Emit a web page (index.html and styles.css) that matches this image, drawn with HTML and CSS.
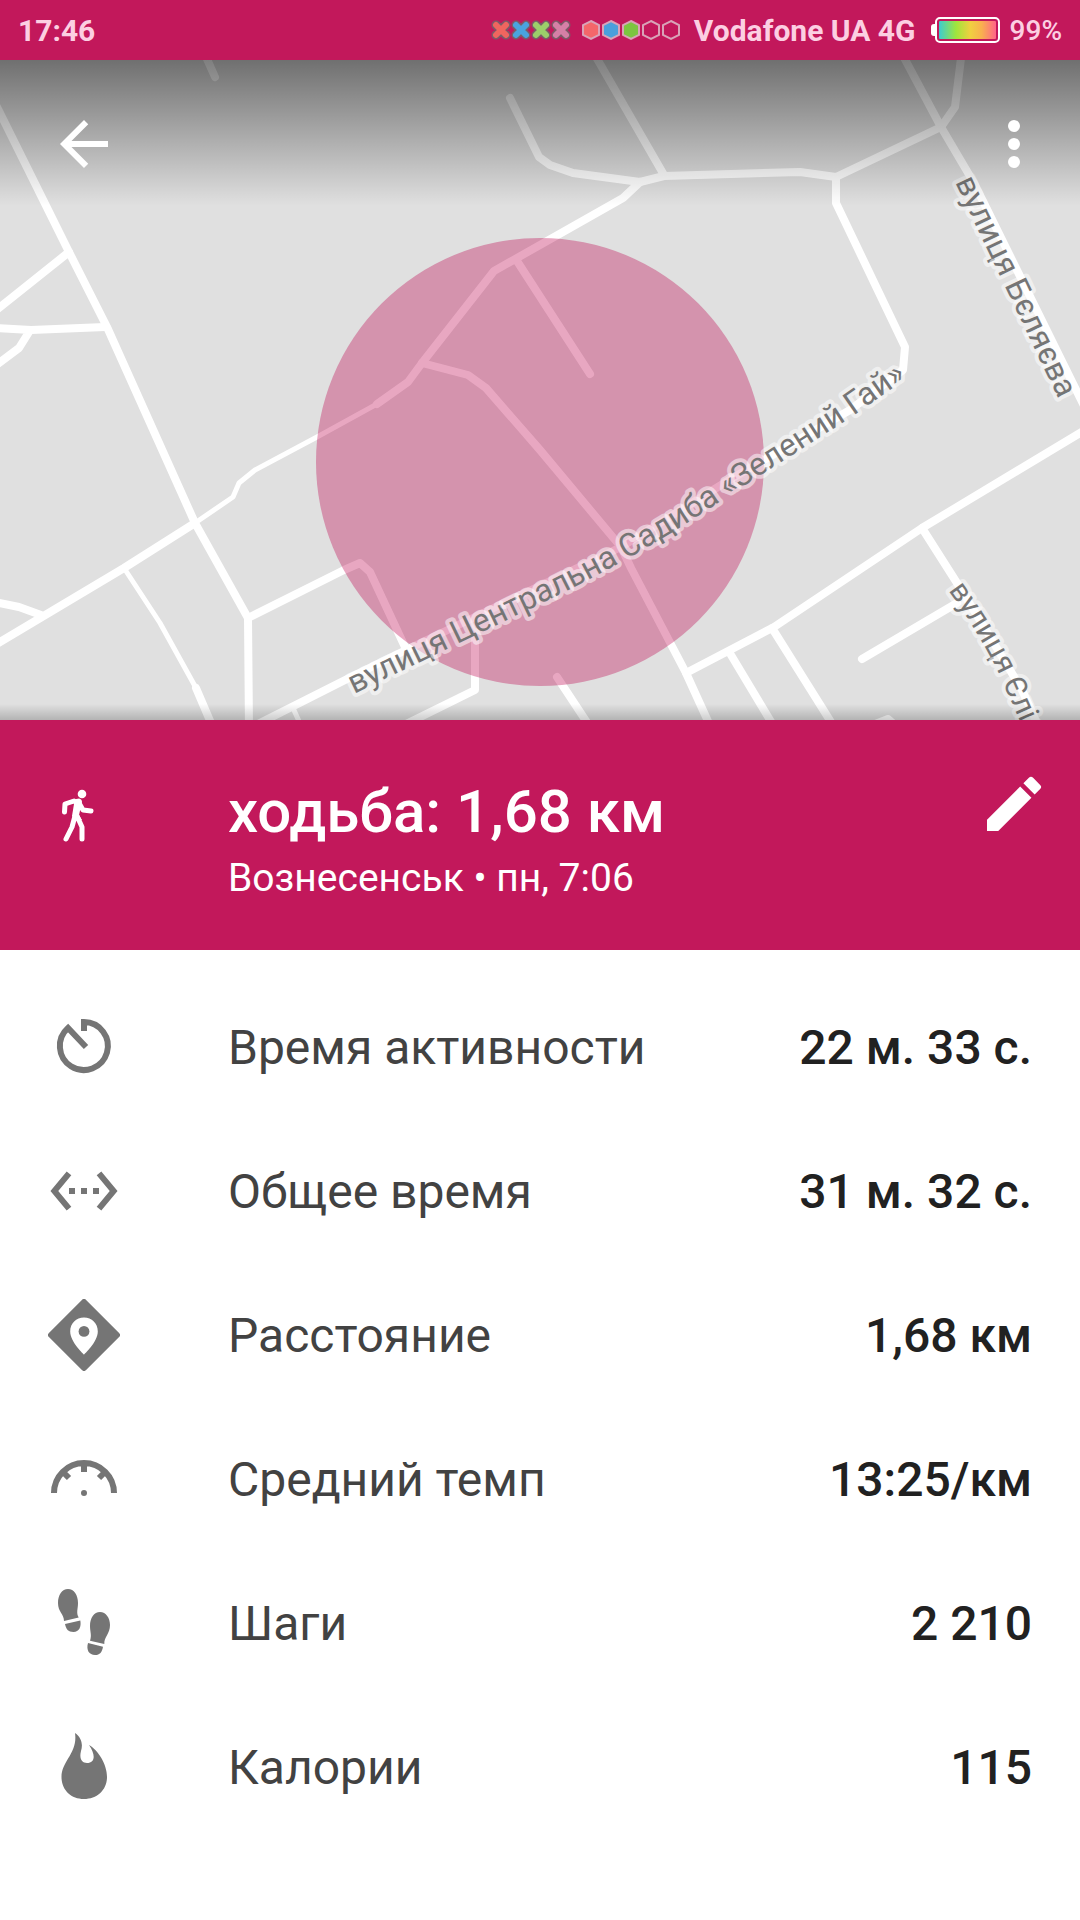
FILE: index.html
```html
<!DOCTYPE html>
<html lang="ru">
<head>
  <meta charset="UTF-8">
  <meta name="viewport" content="width=device-width, initial-scale=1.0">
  <title>Ходьба</title>
  <link rel="stylesheet" href="styles.css">
</head>
<body>
  <div class="statusbar">
    <span class="clock">17:46</span>
    <svg class="signal" width="184" height="24" viewBox="0 0 184 24">
      <g stroke-linecap="round" fill="none">
        <path d="M7 7l10 10M17 7L7 17M27 7l10 10M37 7L27 17M47 7l10 10M57 7L47 17M67 7l10 10M77 7L67 17" stroke="#7b5c68" stroke-width="9"/>
        <path d="M7 7l10 10M17 7L7 17" stroke="#f0655f" stroke-width="6"/>
        <path d="M27 7l10 10M37 7L27 17" stroke="#4aa3df" stroke-width="6"/>
        <path d="M47 7l10 10M57 7L47 17" stroke="#9ccf6a" stroke-width="6"/>
        <path d="M67 7l10 10M77 7L67 17" stroke="#d67fa6" stroke-width="6"/>
      </g>
      <g stroke="#d9a3b8" stroke-width="2">
        <path d="M102 3l8 4v10l-8 4-8-4V7z" fill="#f4666a"/>
        <path d="M122 3l8 4v10l-8 4-8-4V7z" fill="#4a9fdc"/>
        <path d="M142 3l8 4v10l-8 4-8-4V7z" fill="#7cc540"/>
        <path d="M162 3l8 4v10l-8 4-8-4V7zM182 3l8 4v10l-8 4-8-4V7z" fill="none"/>
      </g>
    </svg>
    <span class="carrier">Vodafone UA 4G</span>
    <span class="battery"></span>
    <span class="percent">99%</span>
  </div>

  <div class="map">
    <svg class="map-canvas" viewBox="0 60 1080 660">
      <defs>
        <path id="street1" d="M354 694L540 604Q640 556 722 500L850 418L950 348"/>
        <path id="street2" d="M955 182L1070 423"/>
        <path id="street3" d="M948 590Q981 636 999 674L1040 766"/>
      </defs>
      <!-- roads -->
      <g class="roads">
        <path d="M-5 103L69 252L107 327L195 523L248 618L249 730"/>
        <path d="M69 252L-5 311M-5 328L31 330L105 327M29 332L19 348L-5 366"/>
        <path d="M203 50L215 77M510 98L539 157L550 165L573 173L640 182L664 176L800 172L836 177L941 127L955 107L962 50"/>
        <path d="M592 50L664 175M900 50L941 127L974 183L1090 418"/>
        <path d="M640 182L623 198L540 245L494 271L422 363L408 382L377 404M517 261L590 374"/>
        <path d="M836 177V203L905 347L903 370L850 410L726 482L621 547L406 650L355 675L252 727"/>
        <path d="M422 363L468 375L486 388L540 450L621 547L631 568L686 673L712 730"/>
        <path d="M-5 645L124 568L195 523M-5 602L19 607L41 615M196 688L214 730"/>
        <path d="M248 618L344 570L360 563L370 572L405 647M475 640V690L400 727"/>
        <path d="M557 677L592 730M686 673L774 627L922 528L1090 427M772 628L836 730M731 655L776 730"/>
        <path d="M922 528L957 583L984 627L1022 690L1040 730M862 659L957 603M870 726L888 719L896 726"/>
        <path class="thin" d="M195 523L233 497L239 483L255 470L317 437L377 404M124 568L160 623L196 688M293 708L303 730"/>
      </g>
      <!-- activity area -->
      <circle class="area" cx="540" cy="462" r="224"/>
      <g class="street-names">
        <text><textPath href="#street1">вулиця Центральна Садиба «Зелений Гай»</textPath></text>
        <text><textPath href="#street2">вулиця Бєляєва</textPath></text>
        <text class="small"><textPath href="#street3">вулиця Єліс</textPath></text>
      </g>
    </svg>
    <div class="toolbar">
      <button class="icon-btn" type="button" aria-label="Назад">
        <svg viewBox="0 0 24 24"><path d="M20 11H7.83l5.59-5.59L12 4l-8 8 8 8 1.41-1.41L7.83 13H20v-2z"/></svg>
      </button>
      <button class="icon-btn" type="button" aria-label="Меню">
        <svg viewBox="0 0 24 24"><circle cx="12" cy="6" r="2"/><circle cx="12" cy="12" r="2"/><circle cx="12" cy="18" r="2"/></svg>
      </button>
    </div>
  </div>

  <header class="summary">
    <svg class="walk" viewBox="0 0 72 72">
      <circle cx="34" cy="14" r="4.3"/>
      <path d="M23 20L31 18.5Q34 19 34 22L31 35L34 40L27 40L24 36L26 24z"/>
      <path class="limb" d="M26 21L17 24L16.500 32M31 23L35 30L43 31M29 36L34 47V59M27 36L24 47L18 59"/>
    </svg>
    <div class="summary-text">
      <h1>ходьба: 1,68 км</h1>
      <p>Вознесенськ • пн, 7:06</p>
    </div>
    <button class="icon-btn" type="button" aria-label="Изменить">
      <svg viewBox="0 0 24 24"><path d="M3 17.250V21h3.750L17.810 9.940l-3.750-3.750L3 17.250zM20.710 7.040a1 1 0 0 0 0-1.410l-2.340-2.340a1 1 0 0 0-1.410 0l-1.830 1.830 3.750 3.750 1.830-1.830z"/></svg>
    </button>
  </header>

  <dl class="stats">
    <div class="row">
      <svg viewBox="0 0 72 72"><path class="line" d="M36 20V11A24 24 0 1 1 20 17L38 36"/></svg>
      <dt>Время активности</dt>
      <dd>22 м. 33 с.</dd>
    </div>
    <div class="row">
      <svg viewBox="0 0 24 24"><path d="M7.770 6.760L6.230 5.480.820 12l5.410 6.520 1.540-1.280L3.420 12l4.350-5.240zM7 13h2v-2H7v2zm10-2h-2v2h2v-2zm-6 2h2v-2h-2v2zm6.770-7.520l-1.540 1.280L20.580 12l-4.350 5.240 1.540 1.280L23.180 12l-5.410-6.520z"/></svg>
      <dt>Общее время</dt>
      <dd>31 м. 32 с.</dd>
    </div>
    <div class="row">
      <svg viewBox="0 0 24 24">
        <path fill-rule="evenodd" d="M12.700.3l11 11a1 1 0 0 1 0 1.400l-11 11a1 1 0 0 1-1.400 0l-11-11a1 1 0 0 1 0-1.400l11-11a1 1 0 0 1 1.400 0zM12 6.200c-2.600 0-4.600 2-4.600 4.600 0 3.500 4.600 7.700 4.600 7.700s4.600-4.200 4.600-7.700c0-2.600-2-4.600-4.600-4.600z"/>
        <circle cx="12" cy="10.800" r="1.800"/>
      </svg>
      <dt>Расстояние</dt>
      <dd>1,68 км</dd>
    </div>
    <div class="row">
      <svg viewBox="0 0 72 72"><path class="line" d="M6 50A30 30 0 0 1 66 50M36 20V29M15 29L21 35M57 29L51 35"/><circle cx="36" cy="50" r="3"/></svg>
      <dt>Средний темп</dt>
      <dd>13:25/км</dd>
    </div>
    <div class="row">
      <svg viewBox="0 0 72 72">
        <path d="M16 34C16 27 10 25 10 16C10 8 14 2 20 2C26 2 30 8 30 16C30 22 28 26 30.700 30.500z"/>
        <path d="M17 37L32.300 33.500C33.500 40 31 45 25.500 45C20 45 18 42 17 37z"/>
        <path d="M42 53.700C44 48 42 45 42 39C42 31 46 25 52 25C58 25 62 31 62 38C62 47 56 50 56.300 57z"/>
        <path d="M40 56L55 59.700C54 65 52 68 47 68C41 68 38 63 40 56z"/>
      </svg>
      <dt>Шаги</dt>
      <dd>2 210</dd>
    </div>
    <div class="row">
      <svg viewBox="0 0 72 72"><path d="M27 2C34 7 35 14 33 20C31 28 34 32 39 32C47 32 48 24 41 14C50 19 59 33 59 46C59 59 49 68 36 68C23 68 13.500 59 13.500 46C13.500 30 30 22 27 2z"/></svg>
      <dt>Калории</dt>
      <dd>115</dd>
    </div>
  </dl>
</body>
</html>
```

FILE: styles.css
```css
* { box-sizing: border-box; }

body {
  margin: 0;
  background: #fff;
  font-family: Roboto, "Noto Sans", sans-serif;
}

h1, p, dl, dt, dd { margin: 0; }

/* status bar */
.statusbar {
  display: flex;
  align-items: center;
  height: 60px;
  padding: 0 18px;
  background: #c2185b;
  color: #fccfe2;
  font-size: 30px;
  font-weight: 700;
}
.signal { margin-left: auto; overflow: visible; }
.carrier { margin-left: 21px; }
.battery {
  position: relative;
  width: 65px;
  height: 26px;
  margin: 0 10px 0 19px;
  padding: 2px;
  border: 2px solid #fff;
  border-radius: 5px;
  background: linear-gradient(90deg, #3ccbd0, #a0e53c 30%, #f0cf40 55%, #f9b04f 75%, #ff6688) content-box;
}
.battery::before {
  content: "";
  position: absolute;
  left: -6px;
  top: 5px;
  width: 4px;
  height: 12px;
  border-radius: 3px 0 0 3px;
  background: #fff;
}
.percent {
  font-size: 28px;
  font-weight: 500;
}

/* map */
.map {
  position: relative;
  background: #e0e0e0;
}
.map::after {
  content: "";
  position: absolute;
  left: 0;
  right: 0;
  bottom: 0;
  height: 16px;
  background: linear-gradient(rgba(0,0,0,0), rgba(0,0,0,.2));
}
.map-canvas {
  display: block;
  width: 100%;
}
.roads path {
  fill: none;
  stroke: #fff;
  stroke-width: 8px;
  stroke-linecap: round;
  stroke-linejoin: round;
}
.roads .thin { stroke-width: 5px; }
.area { fill: rgba(190,2,76,.35); }
.street-names text {
  font-size: 32px;
  fill: #757575;
  stroke: rgba(255,255,255,.5);
  stroke-width: 8px;
  stroke-linejoin: round;
  paint-order: stroke;
}
.street-names .small { font-size: 30px; }
.toolbar {
  position: absolute;
  top: 0;
  left: 0;
  right: 0;
  display: flex;
  justify-content: space-between;
  height: 146px;
  padding: 48px 30px 0 48px;
  background: linear-gradient(rgba(0,0,0,.5), rgba(0,0,0,0));
}
.icon-btn {
  width: 72px;
  height: 72px;
  padding: 0;
  border: 0;
  background: none;
  cursor: pointer;
}
.icon-btn svg {
  display: block;
  width: 100%;
  fill: #fff;
}

/* summary */
.summary {
  display: flex;
  align-items: flex-start;
  padding: 48px 30px 42px 48px;
  background: #c2185b;
  color: #fff;
}
.walk {
  width: 72px;
  height: 72px;
  margin: 12px 108px 0 0;
  fill: #fff;
}
.limb {
  fill: none;
  stroke: #fff;
  stroke-width: 5px;
  stroke-linecap: round;
  stroke-linejoin: round;
}
.summary-text { flex: 1; padding-top: 8px; }
.summary h1 {
  font-size: 60px;
  line-height: 72px;
  font-weight: 500;
}
.summary p {
  font-size: 39px;
  line-height: 60px;
}

/* stats */
.stats { padding: 25px 48px 0; }
.row {
  display: flex;
  align-items: center;
  height: 144px;
}
.row svg {
  width: 72px;
  height: 72px;
  margin-right: 108px;
  fill: #757575;
}
.row .line {
  fill: none;
  stroke: #757575;
  stroke-width: 6px;
}
.row dt {
  flex: 1;
  color: #424242;
  font-size: 48px;
}
.row dd {
  color: #212121;
  font-size: 48px;
  font-weight: 500;
}
```
